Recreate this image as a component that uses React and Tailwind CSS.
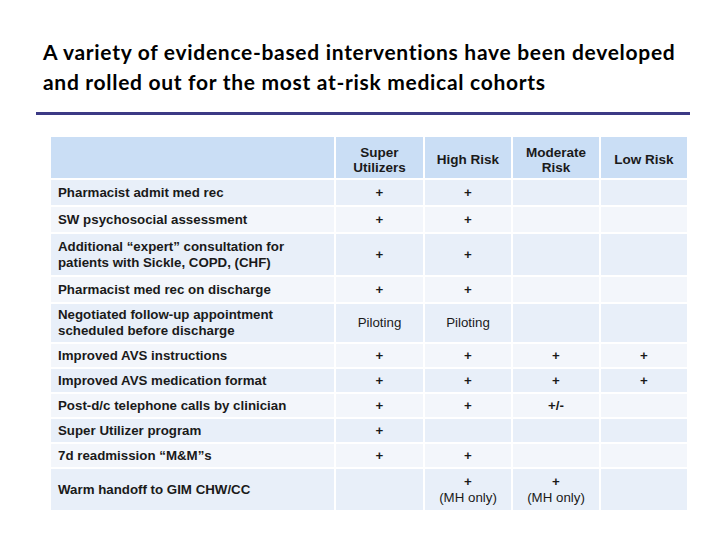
import React from "react";

const rows = [
  { label: ["Pharmacist admit med rec"], h: "h-[25px]", cells: ["+", "+", "", ""], dark: true },
  { label: ["SW psychosocial assessment"], h: "h-[25px]", cells: ["+", "+", "", ""], dark: false },
  { label: ["Additional \u201cexpert\u201d consultation for", "patients with Sickle, COPD, (CHF)"], h: "h-[41px]", cells: ["+", "+", "", ""], dark: true },
  { label: ["Pharmacist med rec on discharge"], h: "h-[25px]", cells: ["+", "+", "", ""], dark: false },
  { label: ["Negotiated follow-up appointment", "scheduled before discharge"], h: "h-[38px]", cells: ["Piloting", "Piloting", "", ""], dark: true },
  { label: ["Improved AVS instructions"], h: "h-[23px]", cells: ["+", "+", "+", "+"], dark: false },
  { label: ["Improved AVS medication format"], h: "h-[23px]", cells: ["+", "+", "+", "+"], dark: true },
  { label: ["Post-d/c telephone calls by clinician"], h: "h-[23px]", cells: ["+", "+", "+/-", ""], dark: false },
  { label: ["Super Utilizer program"], h: "h-[23px]", cells: ["+", "", "", ""], dark: true },
  { label: ["7d readmission \u201cM&M\u201ds"], h: "h-[23px]", cells: ["+", "+", "", ""], dark: false },
  { label: ["Warm handoff to GIM CHW/CC"], h: "h-[41px]", cells: ["", "+|(MH only)", "+|(MH only)", ""], dark: true },
];

function Cell({ v, bg }) {
  if (v.includes("|")) {
    const [a, b] = v.split("|");
    return (
      <div className={`${bg} flex flex-col items-center justify-center leading-[16px]`}>
        <span className="font-bold">{a}</span>
        <span className="font-normal">{b}</span>
      </div>
    );
  }
  const normal = v === "Piloting";
  return (
    <div className={`${bg} flex items-center justify-center ${normal ? "font-normal" : "font-bold"}`}>
      {v}
    </div>
  );
}

export default function App() {
  return (
    <div className="w-[720px] h-[540px] bg-white relative overflow-hidden">
      <div
        className="absolute left-[43px] top-[37px] text-[21px] leading-[30px] font-bold text-black tracking-[0.7px]"
        style={{ fontFamily: "Lato, 'Open Sans', sans-serif" }}
      >
        <div>A variety of evidence-based interventions have been developed</div>
        <div>and rolled out for the most at-risk medical cohorts</div>
      </div>
      <div className="absolute left-[36px] top-[112px] w-[654px] h-[3px] bg-[#3c3a85]" />
      <div
        className="absolute left-[51px] top-[137px] grid grid-cols-[283px_87px_86px_86px_86px] gap-[2px] bg-white text-[13.3px] text-[#1a1a1a]"
        style={{ fontFamily: "'Liberation Sans', Arial, sans-serif" }}
      >
        <div className="h-[41px] bg-[#cadef5]" />
        {[["Super", "Utilizers"], ["High Risk"], ["Moderate", "Risk"], ["Low Risk"]].map((t, i) => (
          <div key={i} className="h-[41px] bg-[#cadef5] flex flex-col items-center justify-center pt-[4px] font-bold text-[13.5px] leading-[15px]">
            {t.map((x, j) => (
              <span key={j}>{x}</span>
            ))}
          </div>
        ))}
        {rows.map((r, i) => {
          const bg = r.dark ? "bg-[#e8eff9]" : "bg-[#f3f6fb]";
          return (
            <React.Fragment key={i}>
              <div className={`${r.h} ${bg} flex flex-col justify-center pl-[7px] font-bold leading-[16px]`}>
                {r.label.map((l, j) => (
                  <span key={j}>{l}</span>
                ))}
              </div>
              {r.cells.map((c, j) => (
                <Cell key={j} v={c} bg={bg} />
              ))}
            </React.Fragment>
          );
        })}
      </div>
    </div>
  );
}
